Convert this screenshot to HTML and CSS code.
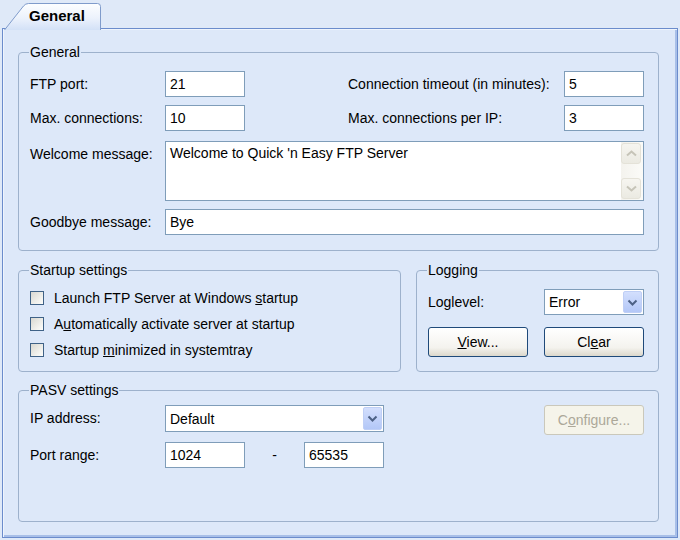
FILE: index.html
```html
<!DOCTYPE html>
<html lang="en">
<head>
    <meta charset="UTF-8">
    <title>Quick 'n Easy FTP Server - General</title>
    <link rel="stylesheet" href="styles.css">
</head>
<body>
    <div class="tabs">
        <div class="tab">
            <svg class="tab-shape" viewBox="0 0 97 27" preserveAspectRatio="none">
                <defs>
                    <linearGradient id="tabFill" x1="0" y1="0" x2="0" y2="1">
                        <stop offset="0" stop-color="#fdfeff"/>
                        <stop offset="0.55" stop-color="#ecf2fc"/>
                        <stop offset="1" stop-color="#d3e1f7"/>
                    </linearGradient>
                </defs>
                <path d="M0.5 27 L19.5 3 Q21.5 0.5 24.5 0.5 L93.5 0.5 Q96.5 0.5 96.5 3.5 L96.5 27 Z" fill="url(#tabFill)"/>
                <path d="M0.5 27 L19.5 3 Q21.5 0.5 24.5 0.5 L93.5 0.5 Q96.5 0.5 96.5 3.5 L96.5 27" fill="none" stroke="#7f9bcb"/>
            </svg>
            <span class="tab-label">General</span>
        </div>
    </div>

    <div class="page">
        <!-- General -->
        <fieldset class="group group-general">
            <legend>General</legend>
            <div class="general-grid">
                <label class="label">FTP port:</label>
                <input class="edit" value="21">
                <label class="label col-4">Connection timeout (in minutes):</label>
                <input class="edit" value="5">

                <label class="label">Max. connections:</label>
                <input class="edit" value="10">
                <label class="label col-4">Max. connections per IP:</label>
                <input class="edit" value="3">

                <label class="label memo-label">Welcome message:</label>
                <div class="memo">
                    <textarea>Welcome to Quick 'n Easy FTP Server</textarea>
                    <div class="vscroll">
                        <div class="vscroll-btn">
                            <svg width="11" height="7" viewBox="0 0 11 7"><path d="M1 5.5 L5.5 1.5 L10 5.5" fill="none" stroke="#c6c4b8" stroke-width="2"/></svg>
                        </div>
                        <div class="vscroll-btn">
                            <svg width="11" height="7" viewBox="0 0 11 7"><path d="M1 1.5 L5.5 5.5 L10 1.5" fill="none" stroke="#c6c4b8" stroke-width="2"/></svg>
                        </div>
                    </div>
                </div>

                <label class="label">Goodbye message:</label>
                <input class="edit span-wide" value="Bye">
            </div>
        </fieldset>

        <div class="group-row">
            <!-- Startup settings -->
            <fieldset class="group group-startup">
                <legend>Startup settings</legend>
                <div class="check-row"><span class="check-box"></span><span>Launch FTP Server at Windows <u>s</u>tartup</span></div>
                <div class="check-row"><span class="check-box"></span><span>A<u>u</u>tomatically activate server at startup</span></div>
                <div class="check-row"><span class="check-box"></span><span>Startup <u>m</u>inimized in systemtray</span></div>
            </fieldset>

            <!-- Logging -->
            <fieldset class="group group-logging">
                <legend>Logging</legend>
                <div class="logging-grid">
                    <label class="label">Loglevel:</label>
                    <div class="combo">
                        <span class="combo-text">Error</span>
                        <span class="combo-btn">
                            <svg width="11" height="7" viewBox="0 0 11 7"><path d="M1.5 1.5 L5.5 5.5 L9.5 1.5" fill="none" stroke="#4d6185" stroke-width="2"/></svg>
                        </span>
                    </div>
                    <button class="btn"><u>V</u>iew...</button>
                    <button class="btn">Cl<u>e</u>ar</button>
                </div>
            </fieldset>
        </div>

        <!-- PASV settings -->
        <fieldset class="group group-pasv">
            <legend>PASV settings</legend>
            <div class="pasv-grid">
                <label class="label">IP address:</label>
                <div class="combo combo-ip">
                    <span class="combo-text">Default</span>
                    <span class="combo-btn">
                        <svg width="11" height="7" viewBox="0 0 11 7"><path d="M1.5 1.5 L5.5 5.5 L9.5 1.5" fill="none" stroke="#4d6185" stroke-width="2"/></svg>
                    </span>
                </div>
                <button class="btn btn-configure" disabled>C<u>o</u>nfigure...</button>

                <label class="label">Port range:</label>
                <input class="edit" value="1024">
                <span class="dash">-</span>
                <input class="edit" value="65535">
            </div>
        </fieldset>
    </div>
</body>
</html>
```

FILE: styles.css
```css
* {
    box-sizing: border-box;
}

body {
    margin: 0;
    width: 680px;
    height: 540px;
    overflow: hidden;
    background: #dfe9f8;
    font-family: 'Liberation Sans', Arial, sans-serif;
    font-size: 14px;
    color: #000;
}

/* Tab strip */
.tabs {
    display: flex;
    height: 28px;
    padding-left: 4px;
}

.tab {
    position: relative;
    z-index: 1;
    width: 97px;
    height: 27px;
    margin-top: 3px;
    padding-left: 25px;
    font-size: 15px;
    font-weight: bold;
    line-height: 26px;
}

.tab-shape {
    position: absolute;
    left: 0;
    top: 0;
    width: 100%;
    height: 100%;
}

.tab-label {
    position: relative;
}

/* Tab page */
.page {
    height: 510px;
    margin: 0 2px;
    padding: 15px 18px 0 15px;
    background: #dde8f9;
    border: 1px solid #6b8ccc;
    box-shadow: inset 1px 1px 0 #eef4fd, inset -2px -2px 0 #a8bfe8;
}

/* Group boxes */
.group {
    margin: 0;
    min-width: 0;
    padding: 11px 11px 15px;
    border: 1px solid #9db1cc;
    border-radius: 4px;
}

.group legend {
    margin-left: -1px;
    padding: 0 1px;
    line-height: 16px;
}

.label {
    line-height: 26px;
    white-space: nowrap;
}

.col-4 {
    grid-column: 4;
}

.edit {
    height: 26px;
    margin: 0;
    padding: 0 4px;
    border: 1px solid #7f9db9;
    background: #fff;
    font: inherit;
    color: #000;
    outline: none;
    min-width: 0;
}

/* General */
.general-grid {
    display: grid;
    grid-template-columns: 135px 80px 103px 216px 80px;
    row-gap: 8px;
}

.span-wide {
    grid-column: 2 / 6;
}

.memo-label {
    align-self: start;
    margin-top: 2px;
}

.memo {
    grid-column: 2 / 6;
    display: flex;
    height: 60px;
    margin-top: 2px;
    border: 1px solid #7f9db9;
    background: #fff;
}

.memo textarea {
    flex: 1;
    padding: 3px 4px;
    border: 0;
    resize: none;
    overflow: hidden;
    outline: none;
    font: inherit;
    line-height: 16px;
}

.vscroll {
    display: flex;
    flex-direction: column;
    justify-content: space-between;
    width: 22px;
    padding: 1px 2px 1px 0;
    background: linear-gradient(90deg, #f4f3ee, #fbfbf8);
}

.vscroll-btn {
    display: flex;
    justify-content: center;
    align-items: center;
    height: 21px;
    border: 1px solid #e4e2d8;
    border-radius: 3px;
    background: linear-gradient(#f6f5f0, #ebeae2);
}

/* Startup + Logging */
.group-row {
    display: flex;
    gap: 15px;
    margin-top: 11px;
}

.group-startup {
    width: 383px;
    padding-top: 7px;
    padding-bottom: 7px;
}

.group-logging {
    flex: 1;
    padding-bottom: 14px;
}

.check-row {
    display: flex;
    align-items: center;
    gap: 10px;
    height: 26px;
    white-space: nowrap;
}

.check-box {
    width: 14px;
    height: 14px;
    border: 1px solid #3f6287;
    background: linear-gradient(135deg, #d9d8d1, #f3f3ef 70%, #fdfdfb);
}

.logging-grid {
    display: grid;
    grid-template-columns: 100px 100px;
    column-gap: 16px;
    row-gap: 12px;
}

.combo {
    display: flex;
    align-items: center;
    height: 26px;
    padding: 1px;
    border: 1px solid #7f9db9;
    background: #fff;
}

.combo-text {
    flex: 1;
    padding-left: 3px;
}

.combo-btn {
    display: flex;
    justify-content: center;
    align-items: center;
    width: 19px;
    height: 100%;
    border: 1px solid #bfcff6;
    border-radius: 2px;
    background: linear-gradient(#d3dffd, #b3c7f7);
}

.btn {
    height: 30px;
    margin: 0;
    padding: 0;
    border: 1px solid #1f4a7a;
    border-radius: 3px;
    background: linear-gradient(#ffffff, #f4f3ee 70%, #dcd8cc);
    font: inherit;
    color: #000;
}

.btn:disabled {
    border-color: #cac8bb;
    background: #f5f4ea;
    color: #aca899;
}

/* PASV */
.group-pasv {
    margin-top: 10px;
    padding-top: 7px;
    padding-bottom: 53px;
}

.pasv-grid {
    display: grid;
    grid-template-columns: 135px 80px 59px 80px 160px 100px;
    grid-template-rows: 30px 26px;
    row-gap: 7px;
}

.pasv-grid .label {
    line-height: 27px;
}

.combo-ip {
    grid-column: 2 / 5;
    height: 27px;
}

.btn-configure {
    grid-column: 6;
}

.dash {
    line-height: 26px;
    text-align: center;
}
```
